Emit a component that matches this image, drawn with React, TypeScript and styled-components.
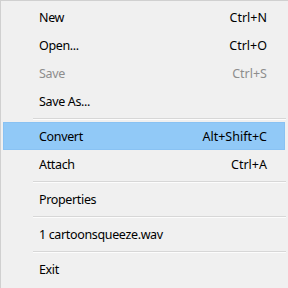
import styled, { createGlobalStyle } from 'styled-components'

const GlobalStyle = createGlobalStyle`
  html, body {
    margin: 0;
    padding: 0;
    background: #f0f0f0;
  }
`

const Menu = styled.div`
  width: 288px;
  height: 288px;
  box-sizing: border-box;
  padding: 2px;
  background-color: #f0f0f0;
  border: 1px solid #d0d0d0;
  border-right: none;
  border-bottom: none;
  display: flex;
  flex-direction: column;
  font-family: 'Noto Sans', 'Open Sans', sans-serif;
  font-size: 12.5px;
`

const Item = styled.div<{ $disabled?: boolean; $active?: boolean }>`
  height: 28px;
  box-sizing: border-box;
  display: flex;
  align-items: center;
  justify-content: space-between;
  padding: 1px 17px 0 35px;
  color: ${(p) => (p.$disabled ? '#8d8d8d' : '#000')};
  background-color: ${(p) => (p.$active ? '#91c9f7' : 'transparent')};
  border: 1px solid ${(p) => (p.$active ? '#89c2f3' : 'transparent')};
  margin-right: 1px;
`

const Label = styled.span`
  letter-spacing: -0.35px;
`

const Shortcut = styled.span`
  white-space: nowrap;
`

const Separator = styled.div`
  height: 7px;
  margin-left: 30px;
  display: flex;
  align-items: center;
  &::after {
    content: '';
    flex: 1;
    height: 1px;
    background-color: #d7d7d7;
    border-bottom: 1px solid #fcfcfc;
  }
`

type Entry =
  | { label: string; keys?: string; disabled?: boolean; active?: boolean }
  | 'sep'

const entries: Entry[] = [
  { label: 'New', keys: 'Ctrl+N' },
  { label: 'Open...', keys: 'Ctrl+O' },
  { label: 'Save', keys: 'Ctrl+S', disabled: true },
  { label: 'Save As...' },
  'sep',
  { label: 'Convert', keys: 'Alt+Shift+C', active: true },
  { label: 'Attach', keys: 'Ctrl+A' },
  'sep',
  { label: 'Properties' },
  'sep',
  { label: '1 cartoonsqueeze.wav' },
  'sep',
  { label: 'Exit' },
]

const App: React.FC = () => {
  return (
    <>
      <GlobalStyle />
      <Menu>
        {entries.map((e, i) =>
          e === 'sep' ? (
            <Separator key={i} />
          ) : (
            <Item key={i} $disabled={e.disabled} $active={e.active}>
              <Label>{e.label}</Label>
              {e.keys && <Shortcut>{e.keys}</Shortcut>}
            </Item>
          )
        )}
      </Menu>
    </>
  )
}

export default App
